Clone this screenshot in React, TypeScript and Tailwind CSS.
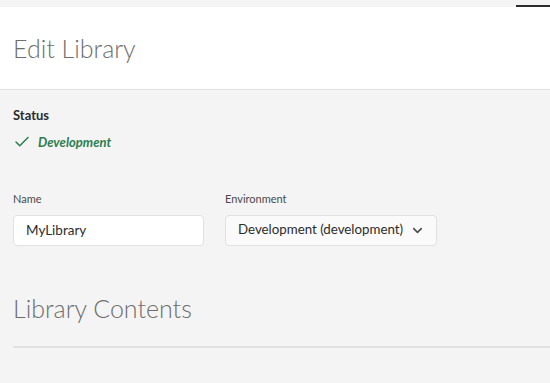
import { ChevronDown, Check } from 'lucide-react'

export default function App() {
  return (
    <div className="w-[550px] h-[383px] overflow-hidden bg-[#f4f4f4] font-['Lato',sans-serif]">
      <div className="h-[7px] flex justify-end items-end">
        <div className="w-[34px] h-[2px] bg-[#2c2c2c]" />
      </div>
      <header className="h-[83px] bg-white border-b border-[#e1e1e1] flex items-center px-[13px]">
        <h1 className="text-[25px] font-light text-[#6e6e6e] leading-none">Edit Library</h1>
      </header>

      <main className="px-[13px]">
        <section className="pt-[16px]">
          <h2 className="text-[13px] font-bold text-[#2c2c2c]">Status</h2>
          <div className="mt-[7px] flex items-center gap-[7px] text-[#2d7d4f]">
            <Check size={18} strokeWidth={2} />
            <span className="text-[13px] font-bold italic">Development</span>
          </div>
        </section>

        <section className="mt-[39px] flex gap-[21px]">
          <div>
            <label className="block text-[11px] text-[#4b4b4b] mb-[7px]">Name</label>
            <input
              defaultValue="MyLibrary"
              className="w-[191px] h-[31px] px-[12px] bg-white border border-[#e1e1e1] rounded-[4px] text-[13.5px] text-[#2c2c2c] outline-none"
            />
          </div>
          <div>
            <label className="block text-[11px] text-[#4b4b4b] mb-[7px]">Environment</label>
            <button className="w-[212px] h-[31px] pl-[12px] pr-[11px] bg-[#fafafa] border border-[#e1e1e1] rounded-[4px] flex items-center justify-between text-[13.3px] text-[#2c2c2c] whitespace-nowrap">
              <span>Development (development)</span>
              <ChevronDown size={15} strokeWidth={2.5} className="shrink-0 text-[#4b4b4b]" />
            </button>
          </div>
        </section>

        <section className="mt-[50px]">
          <h2 className="text-[25px] font-light text-[#6e6e6e] leading-none">Library Contents</h2>
          <div className="mt-[25px] mr-[-13px] h-[2px] bg-[#e1e1e1]" />
        </section>
      </main>
    </div>
  )
}
